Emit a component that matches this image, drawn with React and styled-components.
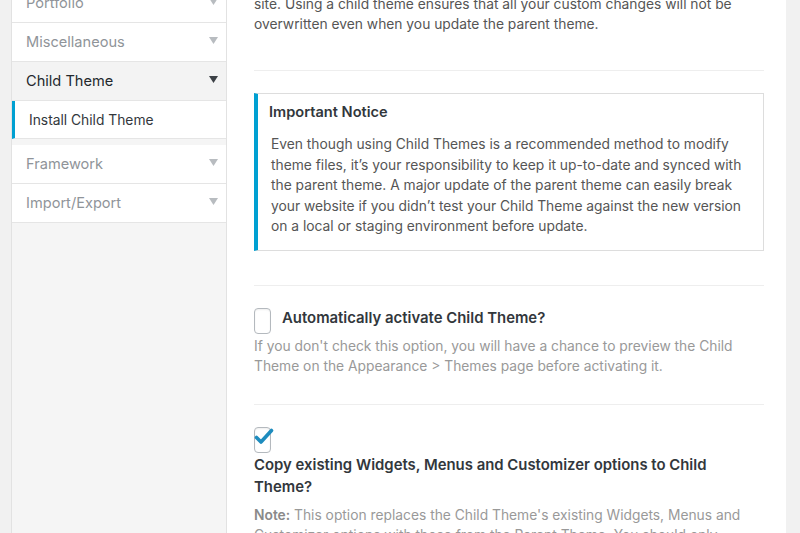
import styled, { createGlobalStyle } from "styled-components";

const GlobalStyle = createGlobalStyle`
  html, body {
    margin: 0;
    padding: 0;
    background: #f1f1f1;
    font-family: Inter, "Liberation Sans", Arial, sans-serif;
    -webkit-font-smoothing: antialiased;
  }
`;

const sections = [
  { label: "Portfolio" },
  { label: "Miscellaneous" },
  { label: "Child Theme", active: true, children: ["Install Child Theme"] },
  { label: "Framework" },
  { label: "Import/Export" },
];

const Arrow = ({ active }) => (
  <svg width="9" height="7" viewBox="0 0 9 7">
    <path d="M0 0 L9 0 L4.5 7 Z" fill={active ? "#3c4146" : "#b8bcc0"} />
  </svg>
);

const Check = () => (
  <svg width="20" height="18" viewBox="0 0 20 18">
    <path
      d="M2.5 9.5 L7 14 L17.5 2.5"
      fill="none"
      stroke="#1e8cbe"
      strokeWidth="3.6"
      strokeLinecap="round"
      strokeLinejoin="round"
    />
  </svg>
);

const App = () => {
  return (
    <Page>
      <GlobalStyle />
      <Sidebar>
        <Menu>
          {sections.map((s) => (
            <li key={s.label}>
              <MenuItem $active={s.active}>
                <span>{s.label}</span>
                <Arrow active={s.active} />
              </MenuItem>
              {s.children && (
                <SubMenu>
                  {s.children.map((c) => (
                    <SubItem key={c}>{c}</SubItem>
                  ))}
                </SubMenu>
              )}
            </li>
          ))}
        </Menu>
      </Sidebar>
      <Content>
        <Intro>
          site. Using a child theme ensures that all your custom changes will
          not be overwritten even when you update the parent theme.
        </Intro>
        <Divider />
        <Notice>
          <NoticeTitle>Important Notice</NoticeTitle>
          <NoticeText>
            Even though using Child Themes is a recommended method to modify
            theme files, it’s your responsibility to keep it up-to-date and
            synced with the parent theme. A major update of the parent theme
            can easily break your website if you didn’t test your Child Theme
            against the new version on a local or staging environment before
            update.
          </NoticeText>
        </Notice>
        <Divider $top={34} />
        <Option>
          <InlineRow>
            <Box />
            <Label>Automatically activate Child Theme?</Label>
          </InlineRow>
          <Description $gap="2px">
            If you don't check this option, you will have a chance to preview
            the Child Theme on the Appearance &gt; Themes page before
            activating it.
          </Description>
        </Option>
        <Divider $top={28} />
        <Option>
          <Box>
            <CheckMark>
              <Check />
            </CheckMark>
          </Box>
          <Label $block>
            Copy existing Widgets, Menus and Customizer options to Child Theme?
          </Label>
          <Description $gap="7px">
            <strong>Note:</strong> This option replaces the Child Theme's
            existing Widgets, Menus and Customizer options with those from the
            Parent Theme. You should only enable this option the first time you
            install a Child Theme.
          </Description>
        </Option>
      </Content>
    </Page>
  );
};

const Page = styled.div`
  display: flex;
  height: 533px;
  overflow: hidden;
  background: #f1f1f1;
`;

const Sidebar = styled.aside`
  width: 214px;
  margin-left: 11px;
  background: #f5f5f5;
  border-left: 1px solid #e2e2e2;
  border-right: 1px solid #e2e2e2;
  flex-shrink: 0;
`;

const Menu = styled.ul`
  list-style: none;
  margin: -16px 0 0;
  padding: 0;
`;

const MenuItem = styled.div`
  display: flex;
  align-items: center;
  justify-content: space-between;
  height: 38px;
  padding: 0 8px 0 14px;
  border-bottom: 1px solid #e5e5e5;
  background: ${(p) => (p.$active ? "#f3f3f3" : "#fff")};
  color: ${(p) => (p.$active ? "#23282d" : "#8f9499")};
  font-size: 14.6px;

  svg {
    margin-top: -4px;
  }
`;

const SubMenu = styled.ul`
  list-style: none;
  margin: 0 0 6px;
  padding: 0;
`;

const SubItem = styled.li`
  display: flex;
  align-items: center;
  height: 37px;
  padding-left: 14px;
  background: #fff;
  border-left: 3px solid #00a0d2;
  border-bottom: 1px solid #e5e5e5;
  color: #32373c;
  font-size: 13.8px;
`;

const Content = styled.main`
  flex: 1;
  margin-right: 14px;
  background: #fff;
  padding: 0 22px 0 27px;
  overflow: hidden;
  color: #555;
`;

const Intro = styled.p`
  margin: -6px 0 0;
  font-size: 13.8px;
  line-height: 20px;
  color: #555;
`;

const Divider = styled.hr`
  border: 0;
  border-top: 1px solid #eee;
  margin: ${(p) => (p.$top ? `${p.$top}px` : "36px")} 0 22px;
`;

const Notice = styled.div`
  border: 1px solid #ddd;
  border-left: 4px solid #00a0d2;
  padding: 8px 16px 13px 11px;
`;

const NoticeTitle = styled.h3`
  margin: 0 0 12px;
  font-size: 14.6px;
  font-weight: 600;
  line-height: 20px;
  color: #32373c;
`;

const NoticeText = styled.p`
  margin: 0;
  padding-left: 2px;
  font-size: 13.8px;
  line-height: 20.5px;
  color: #555;
`;

const Option = styled.div`
  display: flex;
  flex-direction: column;
`;

const InlineRow = styled.div`
  display: flex;
  align-items: flex-start;
  gap: 11px;
`;

const Box = styled.span`
  position: relative;
  display: block;
  width: 15px;
  height: 24px;
  border: 1px solid #b4b9be;
  border-radius: 4px;
  background: #fff;
  box-shadow: inset 0 1px 2px rgba(0, 0, 0, 0.07);
  flex-shrink: 0;
`;

const CheckMark = styled.span`
  position: absolute;
  left: -1px;
  top: 0;
`;

const Label = styled.span`
  font-size: 14.9px;
  font-weight: 600;
  line-height: 22px;
  color: #32373c;
  margin-top: ${(p) => (p.$block ? "1px" : "-1px")};
`;

const Description = styled.p`
  margin: ${(p) => (p.$gap ? p.$gap : "1px")} 0 0;
  font-size: 13.8px;
  line-height: 20px;
  color: #999;

  strong {
    font-weight: 600;
    color: #8a8a8a;
  }
`;

export default App;
